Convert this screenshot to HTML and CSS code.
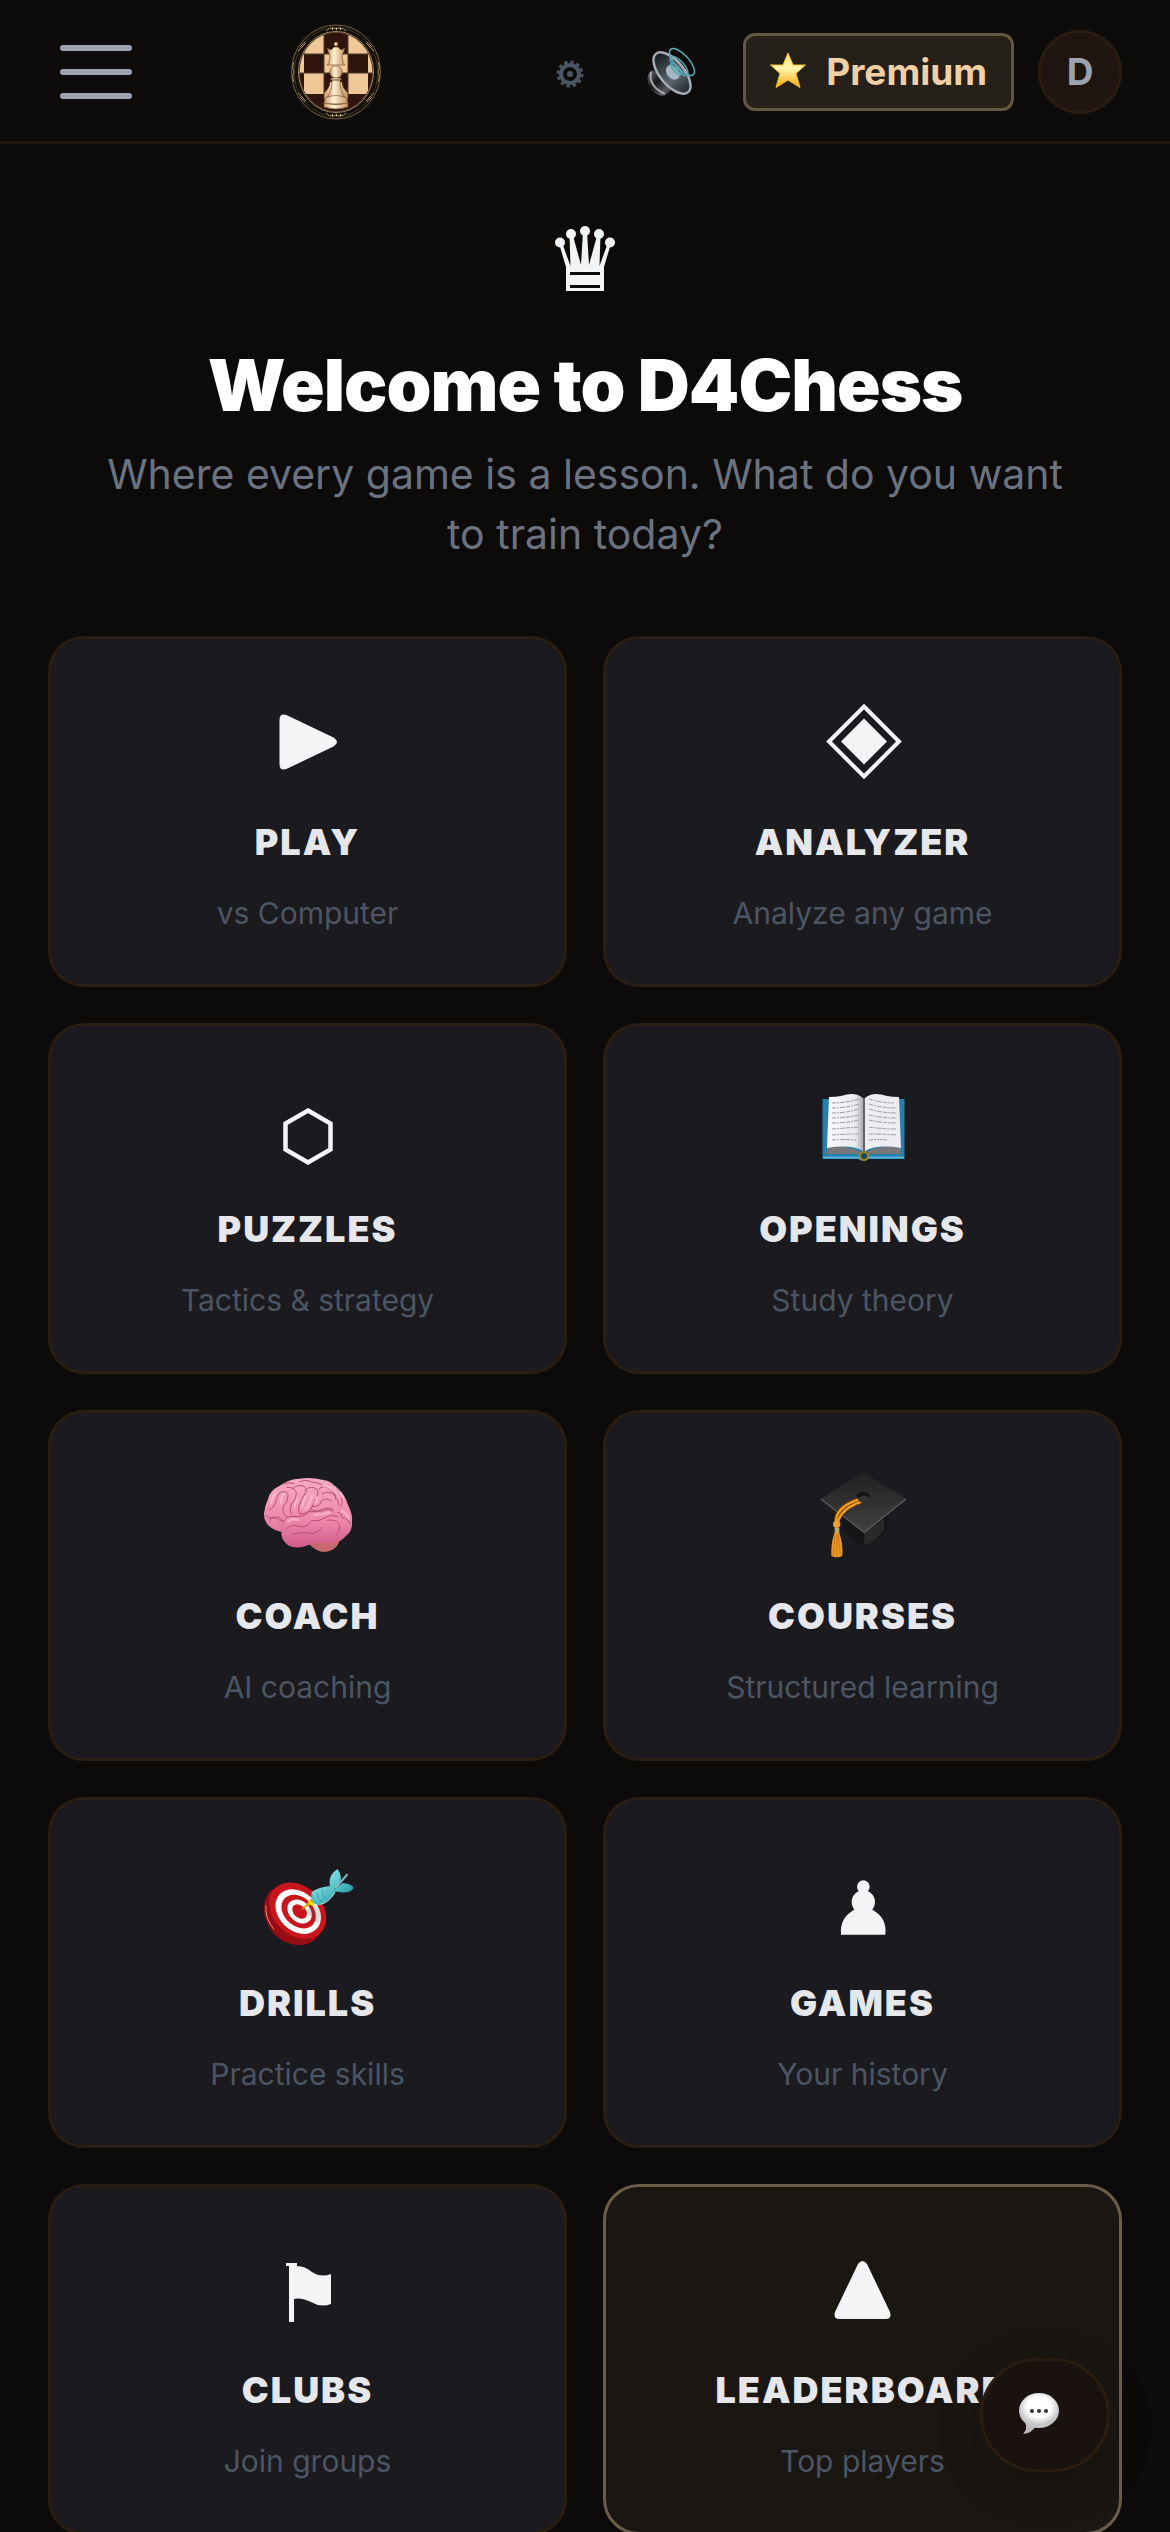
FILE: index.html
```
<!DOCTYPE html>
<html lang="en">
<head>
    <meta charset="UTF-8">
    <meta name="viewport" content="width=device-width, initial-scale=1.0">
    <title>D4Chess</title>
    <link rel="stylesheet" href="styles.css">
</head>
<body>
    <header class="topbar">
        <button class="menu-btn" aria-label="Menu">
            <span></span>
            <span></span>
            <span></span>
        </button>

        <a href="#" class="logo" aria-label="D4Chess">
            <svg viewBox="0 0 96 96">
                <defs>
                    <clipPath id="board"><ellipse cx="48" cy="48" rx="36.500" ry="39.500"/></clipPath>
                    <linearGradient id="ivory">
                        <stop offset="0" stop-color="#c79a68"/>
                        <stop offset=".4" stop-color="#fff0d3"/>
                        <stop offset="1" stop-color="#c2935f"/>
                    </linearGradient>
                </defs>
                <ellipse cx="48" cy="48" rx="44.500" ry="47" fill="#14100c" stroke="#76603f"/>
                <ellipse cx="48" cy="48" rx="42" ry="44.500" fill="none" stroke="#3e3120"/>
                <g clip-path="url(#board)">
                    <path fill="#f0c898" d="M0 0h96v96H0z"/>
                    <path fill="#30150c" d="M36 0h24v30H36zM16 30h20v19H16zM60 30h20v19H60zM0 49h16v21H0zM36 49h24v21H36zM80 49h16v21H80zM0 70h96v26H0z"/>
                    <path d="M36 0v70M60 0v70M8 30h80M8 49h80" stroke="#4c3a28" fill="none"/>
                </g>
                <ellipse cx="48" cy="48" rx="37.500" ry="40.500" fill="none" stroke="#a58a60"/>
                <path d="M38 7q5-5 10-2q5-3 10 2M38 89q5 5 10 2q5 3 10-2M6 38q-3 5 0 10q-3 5 0 10M90 38q3 5 0 10q3 5 0 10M12 23l5-5M10 27l8-8M84 23l-5-5M86 27l-8-8M12 73l5 5M10 69l8 8M84 73l-5 5M86 69l-8 8" fill="none" stroke="#a58a60"/>
                <path d="M44 5h1M48 5h1M52 5h1M44 91h1M48 91h1M52 91h1" stroke="#dcc08c" stroke-width="2"/>
                <g fill="url(#ivory)" stroke="#6d4526" stroke-width=".6">
                    <path d="M39 24l4 2 3-3h4l3 3 4-2-3 8 1 6 2 3H39l2-3 1-6z"/>
                    <circle cx="48" cy="20" r="2"/>
                    <path d="M42 58q0 6-6 11v6h24v-6q-6-5-6-11z"/>
                    <circle cx="48" cy="48" r="6.200"/>
                    <path d="M43 54h10v2H43zM44 56h8q0 12 5 17H39q5-5 5-17z"/>
                    <path d="M37 74q11-5 22 0l1 6H36z"/>
                    <path d="M36 79q12 3 24 0v4q-12 4-24 0z"/>
                </g>
            </svg>
        </a>

        <div class="actions">
            <button class="icon-btn" aria-label="Settings">
                <svg viewBox="0 0 84 84">
                    <circle cx="43" cy="44" r="9" fill="none" stroke="#4b5563" stroke-width="4"/>
                    <circle cx="43" cy="44" r="12" fill="none" stroke="#4b5563" stroke-width="3" stroke-dasharray="3.300 2.983"/>
                    <circle cx="43" cy="44" r="3" fill="#4b5563"/>
                </svg>
            </button>
            <button class="icon-btn" aria-label="Sound">
                <svg viewBox="0 0 84 84">
                    <defs>
                        <linearGradient id="driver" x1="0" y1="0" x2="1" y2="1">
                            <stop offset="0" stop-color="#6f7276"/>
                            <stop offset=".4" stop-color="#15171a"/>
                            <stop offset=".7" stop-color="#55585c"/>
                            <stop offset="1" stop-color="#1b1c1e"/>
                        </linearGradient>
                        <linearGradient id="cone">
                            <stop offset="0" stop-color="#14181b"/>
                            <stop offset=".6" stop-color="#5d666d"/>
                            <stop offset="1" stop-color="#202529"/>
                        </linearGradient>
                    </defs>
                    <path d="M17 40q-6 4-4 13 3 10 13 13 5 0 10-6l4-6z" fill="url(#driver)"/>
                    <path d="M16 42q-3 14 14 22" stroke="#a7aaad" stroke-width="2" fill="none"/>
                    <path d="M20 25q-4 12 7 27 13 13 27 10z" fill="#55595e"/>
                    <g transform="rotate(50 37 43)">
                        <ellipse cx="37" cy="43" rx="25" ry="12" fill="url(#cone)" stroke="#a5acb6" stroke-width="2.500"/>
                        <ellipse cx="37" cy="42" rx="8" ry="6" fill="#a5b6c5"/>
                    </g>
                    <g fill="none" stroke="#58a9b3" stroke-width="1.500">
                        <ellipse cx="47" cy="32" rx="17" ry="7" transform="rotate(48 47 32)"/>
                        <ellipse cx="44" cy="36" rx="12" ry="5" transform="rotate(48 44 36)"/>
                        <ellipse cx="41" cy="39" rx="7" ry="3" transform="rotate(48 41 39)"/>
                    </g>
                </svg>
            </button>
            <button class="premium-btn">
                <svg viewBox="0 0 36 36">
                    <defs>
                        <linearGradient id="gold" x1="0" y1="0" x2="0" y2="1">
                            <stop offset="0" stop-color="#ffe56a"/>
                            <stop offset=".45" stop-color="#fff6b4"/>
                            <stop offset="1" stop-color="#f7a800"/>
                        </linearGradient>
                    </defs>
                    <path d="M18 0l5 12h12.500l-9.500 8.500 4 14-12-7.500-12 7.500 4-14L.5 12H13z" fill="url(#gold)" stroke="#f4bd27" stroke-linejoin="round"/>
                </svg>
                Premium
            </button>
            <button class="avatar">D</button>
        </div>
    </header>

    <main>
        <section class="hero">
            <svg class="crown" viewBox="0 0 96 96">
                <circle cx="23" cy="26.500" r="5"/>
                <circle cx="34" cy="18" r="5"/>
                <circle cx="48" cy="15" r="5"/>
                <circle cx="62" cy="18" r="5"/>
                <circle cx="73" cy="26.500" r="5"/>
                <path d="M22.500 29l3-1 8 22-1-31 3-1 8.500 31 2-33h4l2 33 8.500-31 3 1-1 31 8-22 3 1L67 51v24H29V51z"/>
                <path class="stripe" d="M33 56h30v3H33zM33 69h30v3H33z"/>
            </svg>
            <h1>Welcome to D4Chess</h1>
            <p>Where every game is a lesson. What do you want to train today?</p>
        </section>

        <nav class="cards">
            <a href="#" class="card">
                <svg viewBox="0 0 96 96"><path d="M19.500 24q0-8 8-4.500l46 22q7 4.500 0 9L27.500 72.500q-8 3.500-8-4.500z"/></svg>
                <h2>PLAY</h2>
                <p>vs Computer</p>
            </a>
            <a href="#" class="card">
                <svg viewBox="0 0 96 96">
                    <path d="M49 10.500l35 35-35 35-35-35z" fill="none" stroke="#f3f4f6" stroke-width="4"/>
                    <path d="M49 22.500l23 23-23 23-23-23z"/>
                </svg>
                <h2>ANALYZER</h2>
                <p>Analyze any game</p>
            </a>
            <a href="#" class="card">
                <svg viewBox="0 0 96 96"><path d="M48 27.500l22.500 13v26l-22.500 13-22.500-13v-26z" fill="none" stroke="#f3f4f6" stroke-width="4.500"/></svg>
                <h2>PUZZLES</h2>
                <p>Tactics &amp; strategy</p>
            </a>
            <a href="#" class="card">
                <svg viewBox="0 0 96 96">
                    <defs>
                        <linearGradient id="page">
                            <stop offset="0" stop-color="#fafafd"/>
                            <stop offset=".8" stop-color="#e8e8ee"/>
                            <stop offset="1" stop-color="#a9a9b0"/>
                        </linearGradient>
                    </defs>
                    <path d="M7.500 16h82v60h-36q-5 4-10 0h-36z" fill="#277fab"/>
                    <path d="M8 74.500h35q6 4 11 0h35" stroke="#55b5e2" stroke-width="2" fill="none"/>
                    <path d="M13 65q20-4 34 5h3q15-9 35-5l1 6H56l-7 4-7-4H11z" fill="#77777a"/>
                    <path d="M14 14q7 0 12-1 14-5 22 2v53q-12-7-36-3z" fill="url(#page)"/>
                    <path d="M84 14q-7 0-12-1-14-5-22 2v53q12-7 36-3z" fill="#ececf1"/>
                    <path d="M49 15v54" stroke="#646469" stroke-width="2"/>
                    <path d="M17 20q14 0 27-4M17 25q14 0 27-4M17 30q14 0 27-4M17 35q14 0 27-3M17 40q14 0 27-3M17 46q14-1 27-2M17 52q14-1 27-1M17 57q12-1 24 0M54 16q13 4 25 4M54 21q13 4 28 4M54 26q13 4 28 4M54 32q13 3 28 3M54 37q13 3 28 3M54 44q13 2 28 2M54 51q13 0 28 1M54 57q9-1 18 0" fill="none" stroke="#9a9aa1" stroke-dasharray="4 1 2 1 5 1"/>
                    <circle cx="49" cy="73" r="4" fill="#174a5c" stroke="#9a8520" stroke-width="2"/>
                </svg>
                <h2>OPENINGS</h2>
                <p>Study theory</p>
            </a>
            <a href="#" class="card">
                <svg viewBox="58 60 288 288">
                    <defs>
                        <linearGradient id="brain" x1="0" y1="0" x2="0" y2="1">
                            <stop offset="0" stop-color="#f7abc3"/>
                            <stop offset=".6" stop-color="#ee88ac"/>
                            <stop offset="1" stop-color="#d15c89"/>
                        </linearGradient>
                    </defs>
                    <path d="M198 262q45-17 99 3-2 34-43 41-27 1-52-27z" fill="#c5686f"/>
                    <path d="M176 270l24 12 8-8z" fill="#71534e"/>
                    <path d="M70 190q3-24 12-43 7-28 34-39 28-21 60-22 35-5 72 4 28 4 42 29 25 16 31 44 16 30 13 52 2 31-21 45-13 21-55 18-34-3-65 11-45 12-63-16-10-12-7-27-30-6-45-26-9-12-8-30z" fill="url(#brain)"/>
                    <g fill="none" stroke="#b94f7a" stroke-width="3" stroke-linecap="round">
                        <path d="M75 195q10 14 28 9 12-8 21 6M88 214q-1-18 17-11 10 10 20 9M86 180q17-8 22-34 4-19 18-21 14-3 16 12 2 16-12 30-10 23 10 34M153 193q-9-13 0-31 17-21 13-38-7-13-27-12M178 192q-9-13 0-32 10-22 18-35 4-14-12-18-20-2-29 10M178 192q22 0 33-15 10-25 20-42 6-20-18-23-14 0-20 10M211 177q13 12 32 2 22-10 34 0M215 170q25 0 27-17 17-14 31 2M235 117q12-14 33 1 20 14 17 30M245 131q20-11 36 4 14 14 13 29M125 219q9-21 32-20 33 5 48-14 22 1 44-3 20-8 31 5M136 238q15-18 38-9 25 6 39-18 24 5 44-10 20-9 35 0M154 253q30-8 50-4 24 7 39-17M259 211q26-5 35 10 9 16-6 33M291 187q14 3 13 17 18 0 25 17M128 102q16-6 32-2M177 95q20-8 35 1 18 0 31 8M299 170q11-12 3-25"/>
                    </g>
                    <path d="M91 159q4-23 16-31M122 161q-3-19 8-29M161 173q0-13 9-25M184 172q2-17 11-32M194 178q14-12 20-42M222 158q9-7 5-17M142 215q12-12 32-5M223 195q24-2 43-8M250 108q22 4 36 20M284 112q18 14 24 30M304 184q18 8 20 22" fill="none" stroke="#ffc8d8" stroke-width="7" stroke-linecap="round" opacity=".6"/>
                </svg>
                <h2>COACH</h2>
                <p>AI coaching</p>
            </a>
            <a href="#" class="card">
                <svg viewBox="43 60 288 288">
                    <defs>
                        <linearGradient id="felt" x1="0" y1="0" x2="0" y2="1">
                            <stop offset="0" stop-color="#202020"/>
                            <stop offset="1" stop-color="#414141"/>
                        </linearGradient>
                    </defs>
                    <path d="M124 192l6 47q23 34 60 50 34-4 69-52l1-48z" fill="#151515"/>
                    <path d="M192 248l58-42v33q-30 43-60 47z" fill="#292929"/>
                    <path d="M188 67l128 79-125 100L60 146z" fill="url(#felt)"/>
                    <path d="M60 147l131 100 125-100" fill="none" stroke="#5c5c5c" stroke-width="4"/>
                    <path d="M175 148q-72 24-69 70M181 156q-65 21-71 62" fill="none" stroke="#6b3a08" stroke-width="13"/>
                    <path d="M175 148q-72 24-69 70M182 155q-63 22-70 63" fill="none" stroke="#f3a022" stroke-width="7"/>
                    <ellipse cx="188" cy="138" rx="20" ry="13" fill="#171717"/>
                    <ellipse cx="190" cy="148" rx="18" ry="10" fill="#353535"/>
                    <circle cx="108" cy="223" r="11" fill="#f0a129"/>
                    <path d="M102 234h14v16h-14z" fill="#b8a66d"/>
                    <path d="M101 249h15q12 35 9 69-16 8-33 0-2-36 9-69z" fill="#e99825"/>
                    <path d="M103 254l-5 63M109 254v65M113 254l6 62" stroke="#b96e17" stroke-width="2"/>
                </svg>
                <h2>COURSES</h2>
                <p>Structured learning</p>
            </a>
            <a href="#" class="card">
                <svg viewBox="58 21 288 288">
                    <defs>
                        <linearGradient id="fin" x1="0" y1="0" x2="1" y2="1">
                            <stop offset="0" stop-color="#8be6e8"/>
                            <stop offset="1" stop-color="#259ba8"/>
                        </linearGradient>
                    </defs>
                    <path d="M96 117q-35 28-23 84 20 64 75 80 45 13 77-14l22-28z" fill="#970d13"/>
                    <g transform="rotate(43 171 182)">
                        <ellipse cx="171" cy="182" rx="96" ry="73" fill="#c9151c"/>
                        <ellipse cx="174" cy="183" rx="76" ry="58" fill="#fff"/>
                        <ellipse cx="175" cy="182" rx="58" ry="43" fill="#c9151c"/>
                        <ellipse cx="177" cy="180" rx="41" ry="31" fill="#fff"/>
                        <ellipse cx="177" cy="180" rx="25" ry="18" fill="#c9151c"/>
                    </g>
                    <path d="M76 166q-4 39 24 72" stroke="#ed8987" stroke-width="3" fill="none"/>
                    <path d="M190 186l23-22 27 8-5 48q-12-4-20-19z" fill="#555" opacity=".2"/>
                    <path d="M179 182l24-27 12-13 9 17-17 6z" fill="#d5ac0b"/>
                    <path d="M204 147l20 20-14-1-6-9z" fill="#ffea00"/>
                    <path d="M213 126q22-15 55-18l17 18q-18 29-49 40-20-2-24-24z" fill="url(#fin)"/>
                    <path d="M267 106q-4-33 24-49 15 22 7 43l-23 24zM275 123l31-24q27 1 33 15-12 17-38 13z" fill="url(#fin)"/>
                    <path d="M275 120l44-50 3 6-31 36z" fill="#82b2bb"/>
                    <path d="M229 127q1 22 15 29M244 119q0 20 15 27M215 133q1 21 17 29" fill="none" stroke="#278e9a" stroke-width="2"/>
                    <path d="M239 163q24-4 43-34" fill="none" stroke="#b7dadd" stroke-width="3"/>
                </svg>
                <h2>DRILLS</h2>
                <p>Practice skills</p>
            </a>
            <a href="#" class="card">
                <svg viewBox="43 21 288 288">
                    <circle cx="188" cy="110" r="19"/>
                    <circle cx="188" cy="156" r="35"/>
                    <path d="M163 178h50q47 25 41 76H121q-5-51 42-76z"/>
                </svg>
                <h2>GAMES</h2>
                <p>Your history</p>
            </a>
            <a href="#" class="card">
                <svg viewBox="0 0 96 96"><path d="M26 19h11v3q8 0 15 6 9 6 19 2v30q-10 4-20-2-10-5-17-3v23h-5V22h-3z"/></svg>
                <h2>CLUBS</h2>
                <p>Join groups</p>
            </a>
            <a href="#" class="card card-active">
                <svg viewBox="0 0 96 96"><path d="M43 20q4.500-6 9 0l23 48q2 7-4 7H24q-6 0-4-7z"/></svg>
                <h2>LEADERBOARD</h2>
                <p>Top players</p>
            </a>
        </nav>
    </main>

    <button class="chat-btn" aria-label="Chat">
        <svg viewBox="0 0 60 60">
            <defs>
                <radialGradient id="bubble" cy=".4">
                    <stop offset=".6" stop-color="#fff"/>
                    <stop offset="1" stop-color="#c6c6c6"/>
                </radialGradient>
            </defs>
            <path d="M10 37q3 7-2 12 9-1 13-8z" fill="#bababa"/>
            <ellipse cx="24" cy="25.500" rx="20" ry="17.500" fill="url(#bubble)"/>
            <g fill="#333">
                <circle cx="17" cy="26" r="2"/>
                <circle cx="24" cy="26" r="2"/>
                <circle cx="31" cy="26" r="2"/>
            </g>
        </svg>
    </button>
</body>
</html>
```
FILE: styles.css
```
*{
    margin: 0;
    padding: 0;
    box-sizing: border-box;
}
body{
    background-color: #0c0b09;
    color: #f3f4f6;
    font-family: Inter, "Liberation Sans", sans-serif;
}
button{
    border: none;
    background: none;
    font-family: inherit;
    cursor: pointer;
}
a{
    color: inherit;
    text-decoration: none;
}
svg{
    display: block;
    flex-shrink: 0;
}

/* top bar */
.topbar{
    position: sticky;
    top: 0;
    z-index: 10;
    display: flex;
    align-items: center;
    justify-content: space-between;
    height: 144px;
    padding: 3px 48px 0;
    background-color: #0d0c0a;
    border-bottom: 3px solid #21170f;
}
.menu-btn{
    display: flex;
    flex-direction: column;
    gap: 18px;
    width: 96px;
    padding: 12px;
}
.menu-btn span{
    height: 6px;
    border-radius: 3px;
    background-color: #9ca3af;
}
.logo svg{
    width: 96px;
    height: 96px;
}
.actions{
    display: flex;
    align-items: center;
    gap: 24px;
}
.icon-btn svg{
    width: 84px;
    height: 84px;
}
.premium-btn{
    display: flex;
    align-items: center;
    gap: 20px;
    height: 78px;
    padding: 0 24px 2px;
    border: 3px solid #635642;
    border-radius: 12px;
    background-color: #25201a;
    color: #f0d0a4;
    font-size: 37px;
    font-weight: 700;
}
.premium-btn svg{
    width: 36px;
    height: 36px;
}
.avatar{
    width: 84px;
    height: 84px;
    padding-bottom: 2px;
    border: 3px solid #2a1c11;
    border-radius: 50%;
    background-color: #1e1511;
    color: #9ca3af;
    font-size: 37px;
    font-weight: 700;
}

/* welcome */
.hero{
    display: flex;
    flex-direction: column;
    align-items: center;
    padding: 72px 96px;
    text-align: center;
}
.crown{
    width: 96px;
    height: 96px;
    margin-bottom: 32px;
    fill: #f3f4f6;
}
.crown .stripe{
    fill: #0c0b09;
}
.hero h1{
    margin-bottom: 18px;
    color: #fff;
    font-size: 72px;
    font-weight: 900;
    line-height: 82px;
    letter-spacing: -1px;
}
.hero p{
    color: #6b7280;
    font-size: 41px;
    line-height: 60px;
}

/* cards */
.cards{
    display: grid;
    grid-template-columns: 1fr 1fr;
    gap: 36px;
    padding: 0 48px 48px;
}
.card{
    display: flex;
    flex-direction: column;
    align-items: center;
    gap: 24px;
    padding: 57px 24px 50px;
    border: 3px solid #2a1d12;
    border-radius: 36px;
    background-color: #1b1a1e;
}
.card-active{
    border-color: #6c5d49;
    background-color: #1a1611;
}
.card svg{
    width: 96px;
    height: 96px;
    fill: #f3f4f6;
}
.card h2{
    color: #e5e7eb;
    font-size: 36px;
    font-weight: 900;
    line-height: 52px;
    letter-spacing: 2px;
}
.card p{
    color: #4b5563;
    font-size: 30px;
    line-height: 42px;
}

/* floating chat */
.chat-btn{
    position: fixed;
    right: 60px;
    bottom: 60px;
    z-index: 20;
    display: flex;
    align-items: center;
    justify-content: center;
    width: 130px;
    height: 114px;
    border: 3px solid #2a1c11;
    border-radius: 57px;
    background-color: #19120e;
    box-shadow: 0 12px 48px rgba(0, 0, 0, 0.15);
}
.chat-btn svg{
    width: 60px;
    height: 60px;
}
```
